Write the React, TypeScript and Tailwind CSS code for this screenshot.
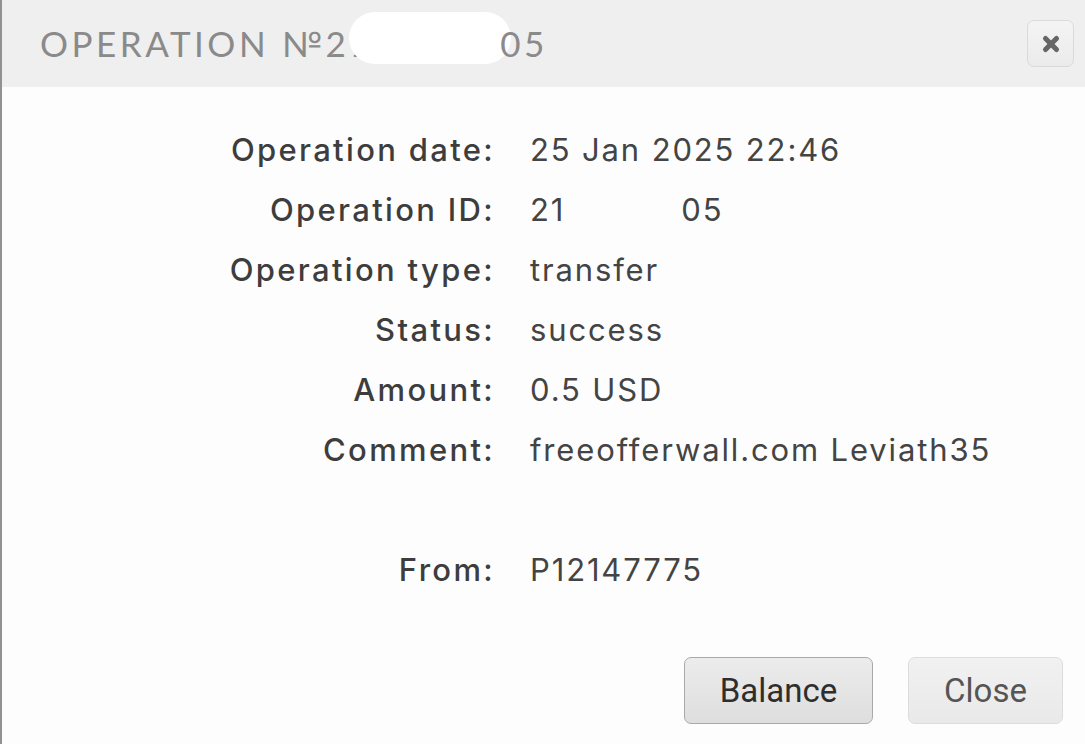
import { X } from 'lucide-react';

const ROWS: [string, React.ReactNode][] = [
  ['Operation date:', '25 Jan 2025 22:46'],
  [
    'Operation ID:',
    <span key="id">
      21<span className="inline-block w-[116px]" />05
    </span>,
  ],
  ['Operation type:', 'transfer'],
  ['Status:', 'success'],
  ['Amount:', '0.5 USD'],
  ['Comment:', 'freeofferwall.com Leviath35'],
];

export default function App() {
  return (
    <div className="flex h-[744px] w-[1085px] flex-col border-l-2 border-[#8f9396] bg-[#fdfdfd] font-['Inter',sans-serif]">
      {/* Header */}
      <div className="flex h-[87px] shrink-0 items-center justify-between bg-[#efefef] pl-[38px] pr-[11px]">
        <h1 className="flex items-center font-['Lato',sans-serif] text-[35px] font-normal tracking-[0.1em] text-[#8a8a8a]">
          OPERATION №21
          <span className="-ml-[24px] -mt-[12px] inline-block h-[52px] w-[162px] rounded-[28px] bg-white" />
          <span className="-ml-[11px]">05</span>
        </h1>
        <button className="flex h-[47px] w-[47px] items-center justify-center rounded-[7px] border border-[#dadada] bg-gradient-to-b from-[#f4f4f4] to-[#ebebeb]">
          <X className="h-[22px] w-[22px] text-[#666]" strokeWidth={5.5} />
        </button>
      </div>

      {/* Details */}
      <div className="grid grid-cols-[493px_1fr] gap-x-[35px] pt-[33px] text-[31px] leading-[60px] tracking-[0.06em]">
        {ROWS.map(([label, value]) => (
          <div key={label} className="contents">
            <div className="text-right font-medium tracking-[0.075em] text-[#3d3d3d]">{label}</div>
            <div className="text-[#444]">{value}</div>
          </div>
        ))}
        <div className="h-[60px]" />
        <div />
        <div className="text-right font-medium tracking-[0.075em] text-[#3d3d3d]">From:</div>
        <div className="text-[#444]">P12147775</div>
      </div>

      {/* Footer */}
      <div className="mt-[57px] flex justify-end gap-[35px] pr-[22px] font-['Roboto',sans-serif] text-[33px]">
        <button className="h-[67px] w-[189px] rounded-[7px] border border-[#a9a9a9] bg-gradient-to-b from-[#ececec] to-[#dedede] text-[#2e2e2e]">
          Balance
        </button>
        <button className="h-[67px] w-[155px] rounded-[7px] border border-[#dcdcdc] bg-gradient-to-b from-[#f1f1f1] to-[#e9e9e9] text-[#555]">
          Close
        </button>
      </div>
    </div>
  );
}
